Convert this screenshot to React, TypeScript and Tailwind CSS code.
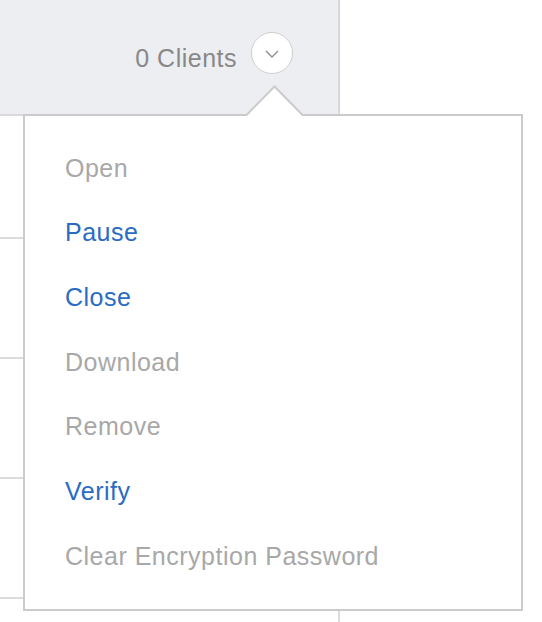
const items = [
  { label: 'Open', enabled: false },
  { label: 'Pause', enabled: true },
  { label: 'Close', enabled: true },
  { label: 'Download', enabled: false },
  { label: 'Remove', enabled: false },
  { label: 'Verify', enabled: true },
  { label: 'Clear Encryption Password', enabled: false },
]

export default function App() {
  return (
    <div className="relative w-[542px] h-[622px] bg-white overflow-hidden font-['Liberation_Sans',Arial,sans-serif]">
      {/* Table behind the menu */}
      <div className="w-[340px]">
        <div className="h-[116px] bg-[#edeef2] border-r-2 border-b-2 border-[#d9d9dc] flex items-start justify-end pt-[32px] pr-[45px]">
          <span className="mt-[5px] text-[25px] tracking-[0.5px] text-[#888888] leading-[42px] mr-[14px]">0 Clients</span>
          <button className="w-[42px] h-[42px] rounded-full bg-white border-[1.5px] border-[#cfcfcf] flex items-center justify-center">
            <svg width="14" height="8" viewBox="0 0 14 8" className="mt-[1px]">
              <polyline points="1,1 7,7 13,1" fill="none" stroke="#8f8f8f" strokeWidth="1.4" />
            </svg>
          </button>
        </div>
        <div className="h-[123px] border-r-2 border-b-2 border-[#dcdcdc]" />
        <div className="h-[120px] border-r-2 border-b-2 border-[#dcdcdc]" />
        <div className="h-[120px] border-r-2 border-b-2 border-[#dcdcdc]" />
        <div className="h-[120px] border-r-2 border-b-2 border-[#dcdcdc]" />
        <div className="h-[120px] border-r-2 border-[#dcdcdc]" />
      </div>

      {/* Actions menu */}
      <div className="absolute left-[23px] top-[114px] w-[500px] h-[497px] bg-white border-2 border-[#cbcbcb] py-[20px] pl-10">
        <svg className="absolute left-[221px] top-[-31px]" width="57" height="33" viewBox="0 0 57 33">
          <polygon points="0,31 28.5,1.5 57,31 57,33 0,33" fill="white" />
          <polyline points="0,30.5 28.5,1.5 57,30.5" fill="none" stroke="#cbcbcb" strokeWidth="2" />
        </svg>
        <ul>
          {items.map((item) => (
            <li
              key={item.label}
              className={`h-[64.7px] flex items-center text-[25px] tracking-[0.5px] ${item.enabled ? 'text-[#2a6cc2]' : 'text-[#a8a8a8]'}`}
            >
              {item.label}
            </li>
          ))}
        </ul>
      </div>
    </div>
  )
}
